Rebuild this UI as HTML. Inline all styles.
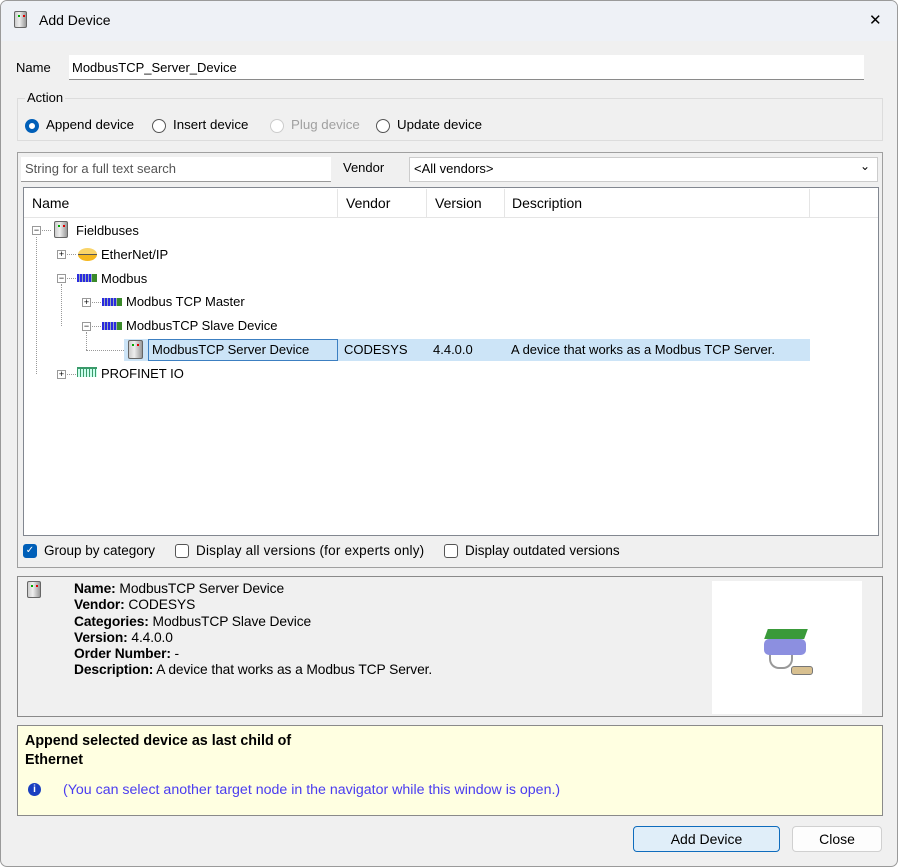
<!DOCTYPE html>
<html><head><meta charset="utf-8"><style>
*{box-sizing:border-box;margin:0;padding:0}
body{width:898px;height:867px;background:#fff;font-family:"Liberation Sans",sans-serif;font-size:13px;color:#000;position:relative;overflow:hidden}
.win{position:absolute;left:0;top:0;width:898px;height:867px;background:#f0f0f0;border:1px solid #9a9a9a;border-radius:7px;overflow:hidden}
.title{position:absolute;left:0;top:0;width:100%;height:40px;background:#eef1f6}
.a{position:absolute;white-space:nowrap}
.box{position:absolute;border:1px solid #a0a0a0}
.inp{position:absolute;background:#fff;border-bottom:1px solid #8a8a8a}
.radio{position:absolute;width:14px;height:14px;border:1px solid #555;border-radius:50%;background:#fff}
.cb{position:absolute;width:14px;height:14px;border:1px solid #555;border-radius:3px;background:#fff}
.pm{position:absolute;width:9px;height:9px;border:1px solid #999;background:#fff;font-size:9px;line-height:7px;text-align:center;color:#000}
.dev{position:absolute;width:14px;height:17px;background:linear-gradient(90deg,#ccc,#eee 40%,#999);border:1px solid #666;border-radius:2px}
.dev:before{content:"";position:absolute;left:3px;top:3px;width:2px;height:2px;background:#0a0}
.dev:after{content:"";position:absolute;left:8px;top:3px;width:2px;height:2px;background:#d00}
.mb{position:absolute;width:20px;height:8px;background:repeating-linear-gradient(90deg,#2a2ae0 0 2px,#9ab 2px 3px);}
.mb:after{content:"";position:absolute;right:0;top:0;width:5px;height:8px;background:#3a8a2a}
.dot{position:absolute;border-left:1px dotted #999}
.hd{position:absolute;border-top:1px dotted #999}
</style></head><body>
<div class="win">
<div class="title"></div>
<div class="dev" style="left:13px;top:10px;width:13px;height:17px"></div>
<div class="a" style="left:38px;top:11px;font-size:14px">Add Device</div>
<div class="a" style="left:868px;top:10px;font-size:15px">✕</div>

<div class="a" style="left:15px;top:59px">Name</div>
<div class="inp" style="left:68px;top:54px;width:795px;height:25px"></div>
<div class="a" style="left:71px;top:59px">ModbusTCP_Server_Device</div>

<div class="box" style="left:16px;top:97px;width:866px;height:43px;border-color:#dcdcdc"></div>
<div class="a" style="left:24px;top:89px;background:#f0f0f0;padding:0 2px">Action</div>
<div class="radio" style="left:24px;top:118px;border:4px solid #005fb8"></div>
<div class="a" style="left:45px;top:116px;font-size:13.3px">Append device</div>
<div class="radio" style="left:151px;top:118px"></div>
<div class="a" style="left:172px;top:116px;font-size:13.3px">Insert device</div>
<div class="radio" style="left:269px;top:118px;border-color:#ccc"></div>
<div class="a" style="left:290px;top:116px;color:#a0a0a0;font-size:13.3px">Plug device</div>
<div class="radio" style="left:375px;top:118px"></div>
<div class="a" style="left:396px;top:116px;font-size:13.3px">Update device</div>

<div class="box" style="left:16px;top:151px;width:866px;height:416px"></div>
<div class="inp" style="left:20px;top:156px;width:310px;height:25px;border-bottom-color:#999"></div>
<div class="a" style="left:24px;top:160px;color:#555">String for a full text search</div>
<div class="a" style="left:342px;top:159px">Vendor</div>
<div class="inp" style="left:408px;top:156px;width:469px;height:25px;border:1px solid #ccc"></div>
<div class="a" style="left:413px;top:160px">&lt;All vendors&gt;</div>
<div class="a" style="left:859px;top:158px;font-size:12px">&#8964;</div>

<div class="box" style="left:22px;top:186px;width:856px;height:349px;background:#fff;border-color:#828790"></div>
<div class="a" style="left:23px;top:187px;width:854px;height:30px;border-bottom:1px solid #e5e5e5"></div>
<div class="a" style="left:336px;top:188px;height:28px;border-left:1px solid #e5e5e5"></div>
<div class="a" style="left:425px;top:188px;height:28px;border-left:1px solid #e5e5e5"></div>
<div class="a" style="left:503px;top:188px;height:28px;border-left:1px solid #e5e5e5"></div>
<div class="a" style="left:808px;top:188px;height:28px;border-left:1px solid #e5e5e5"></div>
<div class="a" style="left:31px;top:194px;font-size:14px">Name</div>
<div class="a" style="left:345px;top:194px;font-size:14px">Vendor</div>
<div class="a" style="left:434px;top:194px;font-size:14px">Version</div>
<div class="a" style="left:511px;top:194px;font-size:14px">Description</div>

<div class="dot" style="left:35px;top:236px;height:137px"></div>
<div class="dot" style="left:60px;top:283px;height:42px"></div>
<div class="dot" style="left:85px;top:331px;height:18px"></div>
<div class="hd" style="left:35px;top:229px;width:15px"></div>
<div class="hd" style="left:60px;top:253px;width:15px"></div>
<div class="hd" style="left:60px;top:277px;width:15px"></div>
<div class="hd" style="left:85px;top:301px;width:15px"></div>
<div class="hd" style="left:85px;top:325px;width:15px"></div>
<div class="hd" style="left:85px;top:349px;width:38px"></div>
<div class="hd" style="left:60px;top:373px;width:15px"></div>
<div class="pm" style="left:31px;top:225px">−</div>
<div class="pm" style="left:56px;top:249px">+</div>
<div class="pm" style="left:56px;top:273px">−</div>
<div class="pm" style="left:81px;top:297px">+</div>
<div class="pm" style="left:81px;top:321px">−</div>
<div class="pm" style="left:56px;top:369px">+</div>

<div class="dev" style="left:53px;top:220px"></div>
<div class="a" style="left:75px;top:222px">Fieldbuses</div>
<div class="a" style="left:77px;top:247px;width:19px;height:13px;border-radius:50%;background:#f5b71e;border-top:6px solid #f9d46a"></div>
<div class="a" style="left:77px;top:253px;width:19px;height:1px;background:#555"></div>
<div class="a" style="left:100px;top:246px">EtherNet/IP</div>
<div class="mb" style="left:76px;top:273px"></div>
<div class="a" style="left:100px;top:270px">Modbus</div>
<div class="mb" style="left:101px;top:297px"></div>
<div class="a" style="left:125px;top:293px">Modbus TCP Master</div>
<div class="mb" style="left:101px;top:321px"></div>
<div class="a" style="left:125px;top:317px">ModbusTCP Slave Device</div>
<div class="a" style="left:123px;top:338px;width:686px;height:22px;background:#cce4f7"></div>
<div class="a" style="left:147px;top:338px;width:190px;height:22px;border:1px solid #3c7fc1"></div>
<div class="dev" style="left:127px;top:339px;height:19px;width:15px"></div>
<div class="a" style="left:151px;top:341px">ModbusTCP Server Device</div>
<div class="a" style="left:343px;top:341px">CODESYS</div>
<div class="a" style="left:432px;top:341px">4.4.0.0</div>
<div class="a" style="left:510px;top:341px">A device that works as a Modbus TCP Server.</div>
<div class="a" style="left:76px;top:366px;width:20px;height:10px;background:repeating-linear-gradient(90deg,#3a9a6a 0 1px,#cfe 1px 3px);border-top:2px solid #3a9a6a"></div>
<div class="a" style="left:100px;top:365px">PROFINET IO</div>

<div class="cb" style="left:22px;top:543px;background:#005fb8;border-color:#005fb8;color:#fff;font-size:10px;line-height:12px;text-align:center">✓</div>
<div class="a" style="left:43px;top:542px;font-size:13.5px">Group by category</div>
<div class="cb" style="left:174px;top:543px"></div>
<div class="a" style="left:195px;top:542px;font-size:13.5px;letter-spacing:0.2px">Display all versions (for experts only)</div>
<div class="cb" style="left:443px;top:543px"></div>
<div class="a" style="left:464px;top:542px;font-size:13.5px">Display outdated versions</div>

<div class="box" style="left:16px;top:575px;width:866px;height:141px;border-color:#8a8a8a"></div>
<div class="dev" style="left:26px;top:580px;width:14px;height:17px"></div>
<div class="a" style="left:73px;top:580px;line-height:16.3px;font-size:13.8px;letter-spacing:-0.1px">
<b>Name:</b> ModbusTCP Server Device<br><b>Vendor:</b> CODESYS<br><b>Categories:</b> ModbusTCP Slave Device<br><b>Version:</b> 4.4.0.0<br><b>Order Number:</b> -<br><b>Description:</b> A device that works as a Modbus TCP Server.</div>
<div class="a" style="left:711px;top:580px;width:150px;height:133px;background:#fff"></div>
<div class="a" style="left:765px;top:628px;width:40px;height:10px;background:#3a9a3a;transform:skewX(-20deg)"></div>
<div class="a" style="left:763px;top:638px;width:42px;height:16px;background:#8c8fe0;border-radius:5px"></div>
<div class="a" style="left:790px;top:665px;width:22px;height:9px;background:#d8c090;border:1px solid #777;border-radius:3px"></div>
<div class="a" style="left:768px;top:654px;width:24px;height:14px;border:2px solid #999;border-top:none;border-radius:0 0 10px 10px"></div>

<div class="box" style="left:16px;top:724px;width:866px;height:91px;background:#ffffe1;border-color:#8a8a8a"></div>
<div class="a" style="left:24px;top:731px;font-weight:bold;line-height:19px;font-size:14.3px">Append selected device as last child of<br>Ethernet</div>
<div class="a" style="left:27px;top:782px;width:13px;height:13px;border-radius:50%;background:#1a3fc0;color:#fff;font-size:10px;font-weight:bold;text-align:center;line-height:13px">i</div>
<div class="a" style="left:62px;top:781px;color:#4a3cf0;font-size:14.2px">(You can select another target node in the navigator while this window is open.)</div>

<div class="a" style="left:632px;top:825px;width:147px;height:26px;background:#e0eef9;border:1px solid #0f6cbd;border-radius:4px;text-align:center;line-height:24px;font-size:14px">Add Device</div>
<div class="a" style="left:791px;top:825px;width:90px;height:26px;background:#fdfdfd;border:1px solid #d0d0d0;border-radius:4px;text-align:center;line-height:24px;font-size:14px">Close</div>
</div>
</body></html>
